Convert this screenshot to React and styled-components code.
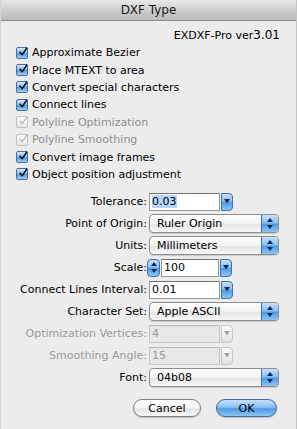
import styled, { createGlobalStyle, css } from "styled-components";

const GlobalStyle = createGlobalStyle`
  html, body {
    margin: 0;
    padding: 0;
    background: #ececec;
  }
  body {
    font-family: "DejaVu Sans", "Liberation Sans", sans-serif;
    font-size: 11px;
    color: #000;
  }
`;

const aqua = css`
  background: linear-gradient(#c5e1fa 0%, #8ac0f0 45%, #4f9ce6 55%, #8cc6f5 100%);
  border: 1px solid #3f6fae;
`;

const OPTIONS = [
  { label: "Approximate Bezier" },
  { label: "Place MTEXT to area" },
  { label: "Convert special characters" },
  { label: "Connect lines" },
  { label: "Polyline Optimization", disabled: true },
  { label: "Polyline Smoothing", disabled: true },
  { label: "Convert image frames" },
  { label: "Object position adjustment" },
];

function Check({ disabled }) {
  return (
    <Box $disabled={disabled}>
      <svg width="12" height="12" viewBox="0 0 12 12">
        <path
          d="M2.5 6.2 L5 9.3 L10.6 1.2"
          fill="none"
          stroke={disabled ? "#9b9b9b" : "#111"}
          strokeWidth={disabled ? 1.2 : 1.8}
          strokeLinecap="round"
          strokeLinejoin="round"
        />
      </svg>
    </Box>
  );
}

function DownArrow({ color = "#0c2a55" }) {
  return (
    <svg width="6" height="5" viewBox="0 0 6 5">
      <path d="M0 0 H6 L3 4.5 Z" fill={color} />
    </svg>
  );
}

function UpDown({ color = "#0c2a55" }) {
  return (
    <svg width="6" height="11" viewBox="0 0 6 11">
      <path d="M3 0 L6 4 H0 Z M0 7 H6 L3 11 Z" fill={color} />
    </svg>
  );
}

function Popup({ value }) {
  return (
    <PopupBox>
      <PopupText>{value}</PopupText>
      <PopupArrow>
        <UpDown />
      </PopupArrow>
    </PopupBox>
  );
}

function Combo({ value, selected, disabled, stepper }) {
  return (
    <ComboWrap>
      {stepper && (
        <Stepper>
          <UpDown />
        </Stepper>
      )}
      <Field $disabled={disabled} $narrow={stepper}>
        {selected ? <Selected>{value}</Selected> : value}
      </Field>
      <ComboButton $disabled={disabled}>
        <DownArrow color={disabled ? "#a0a0a0" : "#0c2a55"} />
      </ComboButton>
    </ComboWrap>
  );
}

export default function App() {
  return (
    <Window>
      <GlobalStyle />
      <TitleBar>DXF Type</TitleBar>
      <Version>
        EXDXF-Pro ver<Big>3.01</Big>
      </Version>
      <CheckList>
        {OPTIONS.map((o) => (
          <CheckRow key={o.label} $disabled={o.disabled}>
            <Check disabled={o.disabled} />
            {o.label}
          </CheckRow>
        ))}
      </CheckList>
      <Form>
        <Label>Tolerance:</Label>
        <Combo value="0.03" selected />
        <Label>Point of Origin:</Label>
        <Popup value="Ruler Origin" />
        <Label>Units:</Label>
        <Popup value="Millimeters" />
        <Label>Scale:</Label>
        <Combo value="100" stepper />
        <Label>Connect Lines Interval:</Label>
        <Combo value="0.01" />
        <Label>Character Set:</Label>
        <Popup value="Apple ASCII" />
        <Label $disabled>Optimization Vertices:</Label>
        <Combo value="4" disabled />
        <Label $disabled>Smoothing Angle:</Label>
        <Combo value="15" disabled />
        <Label>Font:</Label>
        <Popup value="04b08" />
      </Form>
      <Buttons>
        <PushButton>Cancel</PushButton>
        <PushButton $default>OK</PushButton>
      </Buttons>
    </Window>
  );
}

const Window = styled.div`
  width: 297px;
  height: 429px;
  box-sizing: border-box;
  background: #ececec;
  border-right: 1px solid #c4c4c4;
  border-left: 1px solid #d4d4d4;
  display: flex;
  flex-direction: column;
  overflow: hidden;
`;

const TitleBar = styled.div`
  height: 20px;
  flex: none;
  background: linear-gradient(#e9e9e9, #c9c9c9 60%, #bdbdbd);
  border-bottom: 1px solid #8a8a8a;
  display: flex;
  align-items: center;
  justify-content: center;
  font-size: 12px;
  color: #1a1a1a;
`;

const Version = styled.div`
  text-align: right;
  padding: 5px 16px 0 0;
  height: 18px;
  line-height: 18px;
  font-size: 11px;
`;

const Big = styled.span`
  font-size: 12px;
`;

const CheckList = styled.div`
  padding: 0 0 0 15px;
  display: flex;
  flex-direction: column;
`;

const CheckRow = styled.div`
  height: 17.4px;
  display: flex;
  align-items: center;
  gap: 4px;
  color: ${(p) => (p.$disabled ? "#8f8f8f" : "#000")};
`;

const Box = styled.span`
  width: 12px;
  height: 12px;
  box-sizing: border-box;
  border-radius: 2px;
  display: flex;
  align-items: center;
  justify-content: center;
  ${(p) =>
    p.$disabled
      ? css`
          background: linear-gradient(#fbfbfb, #e6e6e6);
          border: 1px solid #c2c2c2;
        `
      : css`
          background: linear-gradient(#d2e8fb 0%, #86bdf0 50%, #4d9ae4 55%, #9bd0f8 100%);
          border: 1px solid #4a6f9e;
        `}
  svg {
    position: relative;
    left: 1px;
    top: -1px;
  }
`;

const Form = styled.div`
  display: grid;
  grid-template-columns: 146px auto;
  column-gap: 2px;
  row-gap: 3px;
  margin-top: 9px;
  align-items: center;
`;

const Label = styled.div`
  text-align: right;
  color: ${(p) => (p.$disabled ? "#9a9a9a" : "#000")};
  font-size: 11px;
`;

const PopupBox = styled.div`
  width: 130px;
  height: 19px;
  box-sizing: border-box;
  border: 1px solid #8d8d8d;
  border-radius: 4px;
  background: linear-gradient(#ffffff, #f3f3f3 50%, #e4e4e4 55%, #f7f7f7);
  display: flex;
  overflow: hidden;
  box-shadow: 0 1px 1px rgba(0, 0, 0, 0.15);
`;

const PopupText = styled.div`
  flex: 1;
  padding-left: 7px;
  line-height: 17px;
`;

const PopupArrow = styled.div`
  width: 16px;
  ${aqua};
  border-width: 0 0 0 1px;
  display: flex;
  align-items: center;
  justify-content: center;
`;

const ComboWrap = styled.div`
  display: flex;
  align-items: center;
  gap: 1px;
  height: 19px;
`;

const Stepper = styled.div`
  width: 13px;
  height: 18px;
  box-sizing: border-box;
  border-radius: 4px;
  ${aqua};
  display: flex;
  align-items: center;
  justify-content: center;
  margin-left: -2px;
`;

const Field = styled.div`
  width: ${(p) => (p.$narrow ? "58px" : "71px")};
  height: 18px;
  box-sizing: border-box;
  background: ${(p) => (p.$disabled ? "#e7e7e7" : "#fff")};
  border: 1px solid ${(p) => (p.$disabled ? "#c6c6c6" : "#9a9a9a")};
  border-top-color: ${(p) => (p.$disabled ? "#b8b8b8" : "#6f6f6f")};
  color: ${(p) => (p.$disabled ? "#9a9a9a" : "#000")};
  padding-left: 2px;
  line-height: 16px;
`;

const Selected = styled.span`
  background: #b5d5ff;
`;

const ComboButton = styled.div`
  width: 12px;
  height: 18px;
  box-sizing: border-box;
  border-radius: 0 4px 4px 0;
  display: flex;
  align-items: center;
  justify-content: center;
  ${(p) =>
    p.$disabled
      ? css`
          background: linear-gradient(#fafafa, #e2e2e2);
          border: 1px solid #c6c6c6;
        `
      : aqua}
`;

const Buttons = styled.div`
  display: flex;
  justify-content: flex-end;
  gap: 15px;
  padding: 12px 19px 0 0;
`;

const PushButton = styled.button`
  height: 18px;
  padding: 0;
  width: ${(p) => (p.$default ? "61px" : "68px")};
  border-radius: 9px;
  font-family: "DejaVu Sans", "Liberation Sans", sans-serif;
  font-size: 11px;
  color: #000;
  box-sizing: border-box;
  box-shadow: 0 1px 1px rgba(0, 0, 0, 0.2);
  ${(p) =>
    p.$default
      ? css`
          ${aqua};
          border-color: #4468a0;
        `
      : css`
          background: linear-gradient(#ffffff, #f4f4f4 50%, #e3e3e3 55%, #fbfbfb);
          border: 1px solid #7f7f7f;
        `}
`;
